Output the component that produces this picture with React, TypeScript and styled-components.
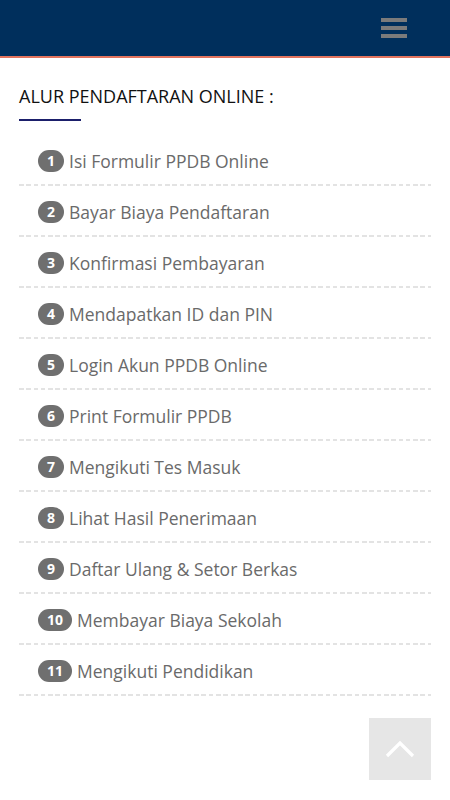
import React from "react";
import styled, { createGlobalStyle } from "styled-components";

const GlobalStyle = createGlobalStyle`
  html, body {
    margin: 0;
    padding: 0;
    background: #ffffff;
    font-family: "Open Sans", "Liberation Sans", sans-serif;
  }
  * {
    box-sizing: border-box;
  }
`;

const steps = [
  "Isi Formulir PPDB Online",
  "Bayar Biaya Pendaftaran",
  "Konfirmasi Pembayaran",
  "Mendapatkan ID dan PIN",
  "Login Akun PPDB Online",
  "Print Formulir PPDB",
  "Mengikuti Tes Masuk",
  "Lihat Hasil Penerimaan",
  "Daftar Ulang & Setor Berkas",
  "Membayar Biaya Sekolah",
  "Mengikuti Pendidikan",
];

export default function App() {
  return (
    <Page>
      <GlobalStyle />
      <Header>
        <MenuButton aria-label="menu">
          <Bar />
          <Bar />
          <Bar />
        </MenuButton>
      </Header>
      <Content>
        <Title>ALUR PENDAFTARAN ONLINE :</Title>
        <TitleLine />
        <StepList>
          {steps.map((label, i) => (
            <Step key={label}>
              <Badge>{i + 1}</Badge>
              <StepText>{label}</StepText>
            </Step>
          ))}
        </StepList>
      </Content>
      <BackToTop aria-label="back to top">
        <svg width="30" height="18" viewBox="0 0 30 18">
          <polyline
            points="2,16 15,3 28,16"
            fill="none"
            stroke="#ffffff"
            strokeWidth="3.2"
          />
        </svg>
      </BackToTop>
    </Page>
  );
}

const Page = styled.div`
  min-height: 800px;
  background: #ffffff;
`;

const Header = styled.header`
  height: 58px;
  background: #002f5c;
  border-bottom: 2px solid #e2735d;
  display: flex;
  align-items: center;
  justify-content: flex-end;
  padding-right: 43px;
`;

const MenuButton = styled.div`
  width: 26px;
  display: flex;
  flex-direction: column;
  gap: 4px;
  margin-top: -1px;
`;

const Bar = styled.span`
  display: block;
  height: 4px;
  background: #7b7b7b;
`;

const Content = styled.main`
  padding: 26px 19px 0;
`;

const Title = styled.h2`
  margin: 0;
  font-size: 18px;
  font-weight: 500;
  line-height: 24px;
  color: #111111;
`;

const TitleLine = styled.div`
  width: 62px;
  height: 2px;
  margin-top: 11px;
  background: #1b1f6b;
`;

const StepList = styled.ul`
  list-style: none;
  margin: 14px 0 0;
  padding: 0;
`;

const Step = styled.li`
  display: flex;
  align-items: center;
  gap: 5px;
  height: 51px;
  padding-left: 19px;
  background-image: repeating-linear-gradient(
    to right,
    #e3e3e3 0 4.5px,
    transparent 4.5px 7.3px
  );
  background-size: 100% 2px;
  background-position: left bottom 0;
  background-repeat: no-repeat;
`;

const Badge = styled.span`
  display: inline-flex;
  align-items: center;
  justify-content: center;
  min-width: 25px;
  height: 22px;
  padding: 0 9px;
  border-radius: 11px;
  background: #6f6f6f;
  color: #ffffff;
  font-size: 14px;
  font-weight: 700;
  line-height: 1;
`;

const StepText = styled.span`
  font-size: 17.5px;
  color: #6a6a6a;
  line-height: 26px;
`;

const BackToTop = styled.div`
  position: fixed;
  right: 19px;
  bottom: 20px;
  width: 62px;
  height: 62px;
  background: #e6e6e6;
  display: flex;
  align-items: center;
  justify-content: center;
`;
